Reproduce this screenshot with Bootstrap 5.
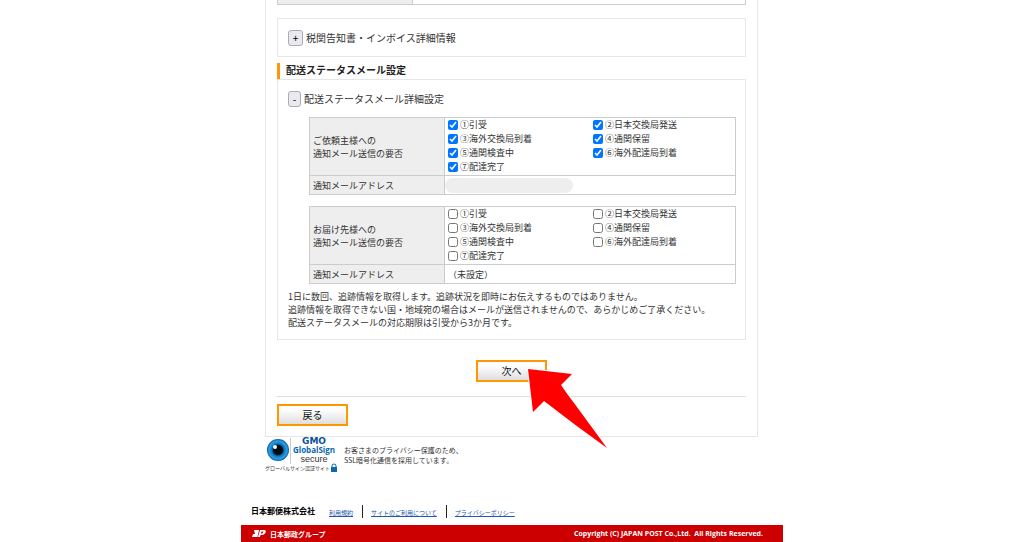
<!DOCTYPE html>
<html lang="ja">
<head>
<meta charset="utf-8">
<meta name="viewport" content="width=device-width, initial-scale=1">
<title>配送ステータスメール設定</title>
<link href="https://cdn.jsdelivr.net/npm/bootstrap@5.3.0/dist/css/bootstrap.min.css" rel="stylesheet">
<style>
body{font-family:"Noto Sans CJK JP",sans-serif;font-size:9px;line-height:13px;color:#333;background:#fff}
.page{max-width:542px}
.sheet{margin:0 25px 0 24px;padding:0 11px 10px;border:1px solid #e6e6e6;border-top:0}
.panel{border:1px solid #e6e6e6;padding:10px}
.strip{height:5px;border:1px solid #ccc;border-top:0;margin-bottom:13px}
.strip-head{width:135px;background:#eee;border-right:1px solid #ccc}
.line-title{font-size:10px;line-height:17px}
.toggle{width:13px;height:16px;padding:0;border:1px solid #aaaab8;border-radius:3px;background:#e9e9ee;color:#000;font-size:10px;line-height:12px}
.toggle.wide{width:15px}
.line-title span{padding-left:3px}
.bar-title{font-size:10px;line-height:13px;border-left:3px solid #ff9800;padding:0 0 3px 6px;margin:6px 0 0;color:#222}
.spec{margin:10px 0 0 21px;border-collapse:collapse;width:calc(100% - 20px)}
.spec+.spec{margin-top:11px}
.spec th,.spec td{border:1px solid #ccc;padding:0 3px;font-weight:400;vertical-align:middle}
.spec th{width:135px;background:#eee}
.spec .line th,.spec .line td{height:19px}
.choices{display:grid;grid-template-columns:1fr 1fr;column-gap:6px;padding-bottom:1px}
.opt{height:14px;line-height:14px;white-space:nowrap;gap:2px}
.opt input{width:10px;height:10px;margin:0;flex:none}
.mask{display:block;width:128px;height:15px;margin-left:-3px;border-radius:8px;background:#eee}
.notes{margin:6px 0 0}
.act{width:71px;height:22px;padding:0;border:2px solid #ff9800;border-radius:0;background:linear-gradient(#fff 20%,#dedede);color:#111;font-size:10px;line-height:16px}
.pointer{position:absolute;left:50px;top:6px;width:84px;height:84px;pointer-events:none;z-index:2}
.rule{margin:14px 0 7px;border-top:1px solid #ddd;opacity:1}
.seal{width:72px;height:36px;flex:none}
.ssl{font-size:7px;line-height:10px;margin-left:7px}
.foot{margin-top:32px;height:20px;padding-left:10px}
.foot strong{font-size:8px;line-height:12px;color:#000}
.foot ul{margin-left:6px}
.foot a{font-size:6px;line-height:8px;color:#2456b0}
.foot li{padding:4px 9px 0 8px;height:13px}
.foot li+li{border-left:1px solid #222}
.red{background:#c00;color:#fff;height:17px;padding:0 20px 0 11px}
.red span{font-size:7px;line-height:16px}
.red .copy{font-family:"Open Sans",sans-serif}
</style>
</head>
<body>
<div class="page mx-auto">
<main class="sheet">
  <div class="strip d-flex"><div class="strip-head"></div></div>
  <section class="panel d-flex align-items-center line-title">
    <button type="button" class="toggle wide" aria-label="開く">+</button><span>税関告知書・インボイス詳細情報</span>
  </section>
  <h2 class="bar-title fw-bold">配送ステータスメール設定</h2>
  <section class="panel">
    <div class="d-flex align-items-center line-title">
      <button type="button" class="toggle" aria-label="閉じる">-</button><span>配送ステータスメール詳細設定</span>
    </div>
    <table class="spec">
      <tr><th scope="row">ご依頼主様への<br>通知メール送信の要否</th><td>
        <div class="choices">
          <div class="opt d-flex align-items-center"><input type="checkbox" id="a1" checked><label for="a1">①引受</label></div>
          <div class="opt d-flex align-items-center"><input type="checkbox" id="a2" checked><label for="a2">②日本交換局発送</label></div>
          <div class="opt d-flex align-items-center"><input type="checkbox" id="a3" checked><label for="a3">③海外交換局到着</label></div>
          <div class="opt d-flex align-items-center"><input type="checkbox" id="a4" checked><label for="a4">④通関保留</label></div>
          <div class="opt d-flex align-items-center"><input type="checkbox" id="a5" checked><label for="a5">⑤通関検査中</label></div>
          <div class="opt d-flex align-items-center"><input type="checkbox" id="a6" checked><label for="a6">⑥海外配達局到着</label></div>
          <div class="opt d-flex align-items-center"><input type="checkbox" id="a7" checked><label for="a7">⑦配達完了</label></div>
        </div></td></tr>
      <tr class="line"><th scope="row">通知メールアドレス</th><td><span class="mask"></span></td></tr>
    </table>
    <table class="spec">
      <tr><th scope="row">お届け先様への<br>通知メール送信の要否</th><td>
        <div class="choices">
          <div class="opt d-flex align-items-center"><input type="checkbox" id="b1"><label for="b1">①引受</label></div>
          <div class="opt d-flex align-items-center"><input type="checkbox" id="b2"><label for="b2">②日本交換局発送</label></div>
          <div class="opt d-flex align-items-center"><input type="checkbox" id="b3"><label for="b3">③海外交換局到着</label></div>
          <div class="opt d-flex align-items-center"><input type="checkbox" id="b4"><label for="b4">④通関保留</label></div>
          <div class="opt d-flex align-items-center"><input type="checkbox" id="b5"><label for="b5">⑤通関検査中</label></div>
          <div class="opt d-flex align-items-center"><input type="checkbox" id="b6"><label for="b6">⑥海外配達局到着</label></div>
          <div class="opt d-flex align-items-center"><input type="checkbox" id="b7"><label for="b7">⑦配達完了</label></div>
        </div></td></tr>
      <tr class="line"><th scope="row">通知メールアドレス</th><td>（未設定）</td></tr>
    </table>
    <p class="notes">1日に数回、追跡情報を取得します。追跡状況を即時にお伝えするものではありません。<br>追跡情報を取得できない国・地域宛の場合はメールが送信されませんので、あらかじめご了承ください。<br>配送ステータスメールの対応期限は引受から3か月です。</p>
  </section>
  <div class="text-center mt-3 pt-1">
    <div class="position-relative d-inline-block align-top">
      <button type="button" class="btn act d-block">次へ</button>
      <svg class="pointer" viewBox="526 367 84 84" aria-hidden="true"><path d="M528 370L572 375L561 386Q567 395 574 404L607 449Q576 427 544 402L533 413Z" fill="#f00" stroke="#fff" stroke-width="2" paint-order="stroke"/></svg>
    </div>
  </div>
  <hr class="rule">
  <button type="button" class="btn act d-block">戻る</button>
</main>
<div class="d-flex align-items-center mx-4">
  <svg class="seal" viewBox="265 437 72 36" role="img" aria-label="GMO GlobalSign secure">
    <defs><radialGradient id="iris"><stop offset=".35" stop-color="#001522"/><stop offset=".6" stop-color="#087fc5"/><stop offset=".82" stop-color="#2f9fe0"/><stop offset="1" stop-color="#0756a4"/></radialGradient></defs>
    <circle cx="278" cy="450" r="11" fill="url(#iris)"/><circle cx="278" cy="450" r="5" fill="#000b14"/><circle cx="275" cy="447" r="2" fill="#fff"/>
    <path d="M290.500 438v26" stroke="#ccc"/>
    <g text-anchor="middle" font-family="Open Sans,sans-serif"><text x="314" y="444" font-family="DejaVu Sans,sans-serif" font-size="9" font-weight="700" fill="#0750a0">GMO</text><text x="314" y="453" font-size="8" font-weight="700" fill="#0869b4">GlobalSign</text><text x="314" y="462" font-family="Liberation Sans,sans-serif" font-size="9" fill="#333">secure</text></g>
    <text x="265" y="470" font-family="Noto Sans CJK JP,sans-serif" font-size="5" fill="#333">グローバルサイン認証サイト</text>
    <path d="M332 467v-1a2 2 0 0 1 4 0v1" fill="none" stroke="#0868b0"/><rect x="331" y="467" width="6" height="5" fill="#0868b0"/>
  </svg>
  <p class="ssl mb-0">お客さまのプライバシー保護のため、<br>SSL暗号化通信を採用しています。</p>
</div>
<footer>
  <div class="foot d-flex">
    <strong>日本郵便株式会社</strong>
    <ul class="list-unstyled d-flex mb-0">
      <li class="d-flex"><a href="#">利用規約</a></li><li class="d-flex"><a href="#">サイトのご利用について</a></li><li class="d-flex"><a href="#">プライバシーポリシー</a></li>
    </ul>
  </div>
  <div class="red d-flex align-items-center justify-content-between">
    <div class="d-flex align-items-center gap-1"><svg width="14" height="9" viewBox="0 0 14 9" aria-hidden="true"><path d="M2 1h5L5.500 8H0L1 5h2zM8 1h4q3 0 1 3.500Q12 6 8.500 6L8 8H6zM9.500 2.500L9 4.500h1.500l1-2z" fill="#fff" fill-rule="evenodd"/></svg><span class="fw-bold">日本郵政グループ</span></div>
    <span class="copy fw-bold">Copyright (C) JAPAN POST Co.,Ltd. &nbsp;All Rights Reserved.</span>
  </div>
</footer>
</div>
<script src="https://cdn.jsdelivr.net/npm/bootstrap@5.3.0/dist/js/bootstrap.bundle.min.js"></script>
</body>
</html>
